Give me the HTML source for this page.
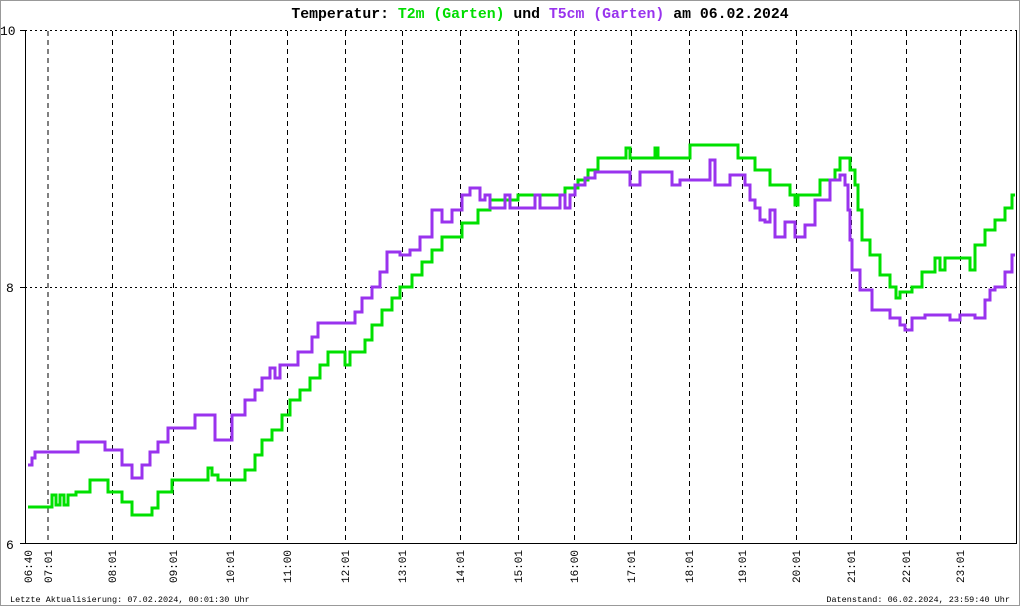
<!DOCTYPE html>
<html><head><meta charset="utf-8"><style>
html,body{margin:0;padding:0;background:#fff}
svg{display:block}
text{font-family:"Liberation Mono","DejaVu Sans Mono",monospace}
</style></head><body>
<svg width="1020" height="606" viewBox="0 0 1020 606" xmlns="http://www.w3.org/2000/svg">
<rect x="0.5" y="0.5" width="1019" height="605" fill="#fff" stroke="#999"/>
<text x="540" y="18" font-size="14.8" font-weight="bold" text-anchor="middle" fill="#000">Temperatur: <tspan fill="#00dd00">T2m (Garten)</tspan> und <tspan fill="#9933ee">T5cm (Garten)</tspan> am 06.02.2024</text>
<g stroke="#000" stroke-width="1" stroke-dasharray="2,3" fill="none">
<line x1="25" y1="30.5" x2="1016" y2="30.5"/>
<line x1="25" y1="287.5" x2="1016" y2="287.5"/>
</g>
<g stroke="#000" stroke-width="1" stroke-dasharray="5,4" fill="none">
<line x1="48" y1="31" x2="48" y2="543"/><line x1="112.5" y1="31" x2="112.5" y2="543"/>
<line x1="173.5" y1="31" x2="173.5" y2="543"/><line x1="230.5" y1="31" x2="230.5" y2="543"/>
<line x1="287.5" y1="31" x2="287.5" y2="543"/><line x1="345.5" y1="31" x2="345.5" y2="543"/>
<line x1="402.5" y1="31" x2="402.5" y2="543"/><line x1="460.5" y1="31" x2="460.5" y2="543"/>
<line x1="518.5" y1="31" x2="518.5" y2="543"/><line x1="574.5" y1="31" x2="574.5" y2="543"/>
<line x1="631.5" y1="31" x2="631.5" y2="543"/><line x1="689.5" y1="31" x2="689.5" y2="543"/>
<line x1="742.5" y1="31" x2="742.5" y2="543"/><line x1="796.5" y1="31" x2="796.5" y2="543"/>
<line x1="851.5" y1="31" x2="851.5" y2="543"/><line x1="906.5" y1="31" x2="906.5" y2="543"/>
<line x1="960.5" y1="31" x2="960.5" y2="543"/>
</g>
<g stroke="#000" stroke-width="1">
<line x1="25.5" y1="30" x2="25.5" y2="544"/>
<line x1="20" y1="543.5" x2="1017" y2="543.5"/>
<line x1="1016.5" y1="30" x2="1016.5" y2="544"/>
<line x1="20" y1="30.5" x2="25" y2="30.5"/><line x1="20" y1="287.5" x2="25" y2="287.5"/>
</g>
<g font-size="13" fill="#000">
<text x="0" y="35">10</text><text x="6" y="292">8</text><text x="6" y="549">6</text>
</g>
<path fill="none" stroke="#00e000" stroke-width="3" d="M28 507 H52 V495 H56 V505 H60 V495 H64 V505 H68 V495 H76 V492 H90 V480 H108 V492 H122 V502 H132 V515 H152 V508 H158 V492 H172 V480 H208 V468 H212 V475 H218 V480 H245 V470 H255 V455 H262 V440 H272 V430 H282 V415 H290 V400 H300 V390 H310 V378 H320 V365 H328 V352 H345 V365 H350 V352 H365 V340 H372 V325 H382 V310 H392 V298 H400 V287 H412 V275 H422 V262 H432 V250 H442 V237 H462 V223 H478 V210 H490 V200 H518 V195 H565 V188 H578 V180 H588 V170 H598 V158 H626 V148 H630 V158 H655 V148 H658 V158 H690 V145 H738 V158 H755 V170 H770 V185 H790 V195 H795 V205 H798 V195 H820 V180 H835 V170 H840 V158 H850 V170 H855 V185 H858 V210 H862 V240 H870 V255 H880 V275 H890 V287 H896 V298 H900 V292 H912 V287 H922 V272 H935 V258 H940 V270 H945 V258 H970 V270 H975 V245 H985 V230 H995 V220 H1005 V208 H1012 V195 H1015"/>
<path fill="none" stroke="#9933ee" stroke-width="3" d="M28 465 H32 V458 H35 V452 H78 V442 H105 V450 H122 V465 H132 V478 H142 V465 H150 V452 H158 V442 H168 V428 H195 V415 H215 V440 H232 V415 H245 V400 H255 V390 H262 V378 H270 V368 H275 V378 H280 V365 H298 V352 H312 V337 H318 V323 H355 V312 H362 V298 H372 V287 H380 V272 H387 V252 H400 V255 H410 V250 H420 V237 H432 V210 H442 V222 H452 V210 H462 V195 H470 V188 H480 V200 H485 V195 H490 V208 H505 V195 H510 V208 H535 V195 H540 V208 H560 V195 H565 V208 H570 V195 H575 V185 H585 V178 H595 V172 H630 V185 H640 V172 H672 V185 H680 V180 H710 V160 H715 V185 H730 V175 H745 V185 H750 V200 H755 V208 H760 V220 H765 V222 H770 V210 H775 V237 H785 V222 H795 V237 H805 V225 H815 V200 H830 V180 H840 V175 H845 V185 H848 V210 H850 V240 H852 V270 H860 V290 H872 V310 H890 V318 H900 V325 H905 V330 H912 V318 H925 V315 H950 V320 H960 V315 H975 V318 H985 V300 H990 V290 H995 V287 H1005 V272 H1012 V255 H1015"/>
<g font-size="11" fill="#000">
<text transform="translate(32,583) rotate(-90)">06:40</text>
<text transform="translate(52,583) rotate(-90)">07:01</text>
<text transform="translate(116,583) rotate(-90)">08:01</text>
<text transform="translate(177,583) rotate(-90)">09:01</text>
<text transform="translate(234,583) rotate(-90)">10:01</text>
<text transform="translate(291,583) rotate(-90)">11:00</text>
<text transform="translate(349,583) rotate(-90)">12:01</text>
<text transform="translate(406,583) rotate(-90)">13:01</text>
<text transform="translate(464,583) rotate(-90)">14:01</text>
<text transform="translate(522,583) rotate(-90)">15:01</text>
<text transform="translate(578,583) rotate(-90)">16:00</text>
<text transform="translate(635,583) rotate(-90)">17:01</text>
<text transform="translate(693,583) rotate(-90)">18:01</text>
<text transform="translate(746,583) rotate(-90)">19:01</text>
<text transform="translate(800,583) rotate(-90)">20:01</text>
<text transform="translate(855,583) rotate(-90)">21:01</text>
<text transform="translate(910,583) rotate(-90)">22:01</text>
<text transform="translate(964,583) rotate(-90)">23:01</text>
</g>
<g font-size="8.5" fill="#000">
<text x="10" y="602">Letzte Aktualisierung: 07.02.2024, 00:01:30 Uhr</text>
<text x="1010" y="602" text-anchor="end">Datenstand: 06.02.2024, 23:59:40 Uhr</text>
</g>
</svg>
</body></html>
